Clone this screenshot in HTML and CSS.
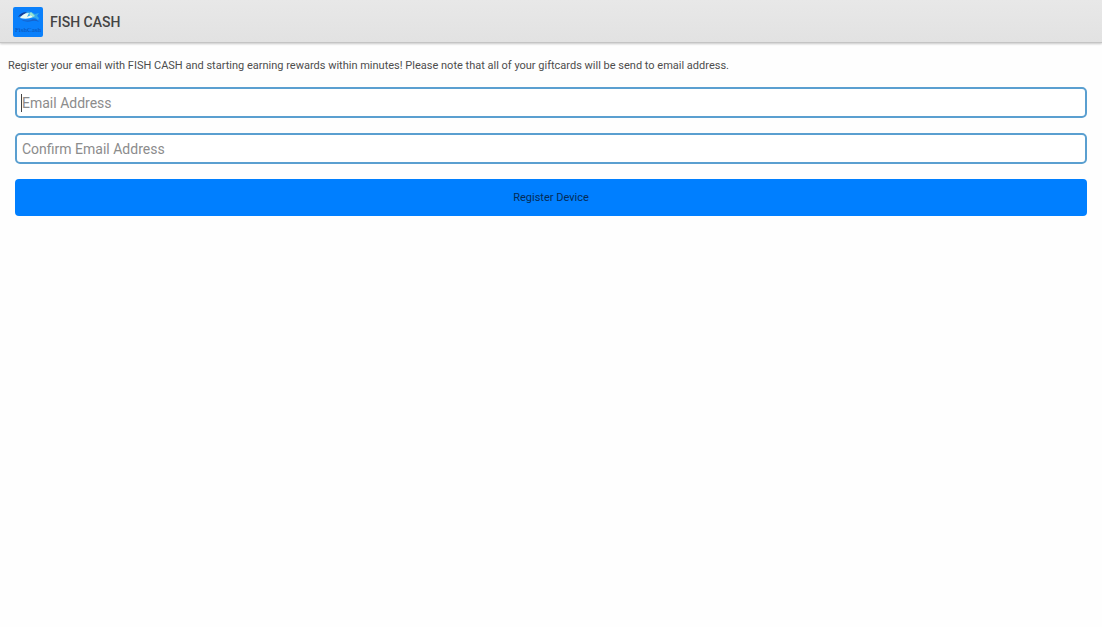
FILE: index.html
```html
<!DOCTYPE html>
<html lang="en">
<head>
<meta charset="utf-8">
<meta name="viewport" content="width=device-width, initial-scale=1">
<title>FISH CASH</title>
<link rel="stylesheet" href="styles.css">
</head>
<body>
<header class="action-bar">
  <svg class="app-icon" viewBox="0 0 30 30" role="img" aria-label="FishCash">
    <rect width="30" height="30" rx="2" fill="#0a80fb"/>
    <path d="M9 7Q15 2 22 7L26 6 24 9Q27 11 25 13Q22 10 19 11Q12 12 6 10Z" fill="#35a9ed"/>
    <path d="M5 10Q8 5 14 5Q11 7 10 9Q7 9 5 10Z" fill="#123f9b"/>
    <path d="M7 11Q10 6 16 6L14 10 18 8 20 10Q14 13 7 11Z" fill="#e9fbf4"/>
    <path d="M18 5L22 9 20 10 16 7Z" fill="#9be5d0"/>
    <path d="M7 12Q15 15 20 12Q24 12 26 15Q22 13 19 14Q12 16 7 12Z" fill="#1763cc"/>
    <text class="icon-label" x="15" y="25" text-anchor="middle">FishCash</text>
  </svg>
  <h1 class="app-title">FISH CASH</h1>
</header>
<main class="content">
  <p class="intro">Register your email with FISH CASH and starting earning rewards within minutes! Please note that all of your giftcards will be send to email address.</p>
  <form class="form">
    <div class="field">
      <input class="input" type="email" placeholder="Email Address" aria-label="Email Address">
      <span class="caret"></span>
    </div>
    <div class="field">
      <input class="input" type="email" placeholder="Confirm Email Address" aria-label="Confirm Email Address">
    </div>
    <button class="submit" type="button">Register Device</button>
  </form>
</main>
</body>
</html>
```
FILE: styles.css
```css
* {
  box-sizing: border-box;
}

body {
  margin: 0;
  background: #fefefe;
  color: #4d4d4d;
  font-family: Roboto, "Liberation Sans", sans-serif;
}

.action-bar {
  display: flex;
  align-items: center;
  gap: 7px;
  height: 43px;
  padding: 1px 13px 0;
  background: linear-gradient(#e8e8e8, #e2e2e2);
  border-bottom: 1px solid #c4c4c4;
  box-shadow: 0 1px 2px #c8c8c8;
}

.app-icon {
  width: 30px;
  height: 30px;
}

.icon-label {
  fill: #0b50b4;
  font-family: "Liberation Serif", serif;
  font-size: 7px;
}

.app-title {
  margin: 0;
  color: #444;
  font-size: 14px;
  font-weight: 500;
  line-height: 20px;
}

.content {
  padding: 16px 8px;
}

.intro {
  margin: 0;
  font-size: 11px;
  line-height: 14px;
}

.form {
  display: flex;
  flex-direction: column;
  gap: 15px;
  padding: 14px 7px;
}

.field {
  position: relative;
  display: flex;
}

.input {
  flex: 1;
  min-width: 0;
  height: 31px;
  padding: 1px 5px 0;
  border: 2px solid #5a9fd0;
  border-radius: 5px;
  background: #fff;
  color: #444;
  font: inherit;
  font-size: 14px;
}

.input::placeholder {
  color: #8c8c8c;
  opacity: 1;
}

.caret {
  position: absolute;
  top: 7px;
  left: 6px;
  width: 1px;
  height: 18px;
  background: #444;
}

.submit {
  height: 37px;
  padding: 0;
  border: 0;
  border-radius: 4px;
  background: #007fff;
  color: #052c58;
  font: inherit;
  font-size: 11px;
}
```
